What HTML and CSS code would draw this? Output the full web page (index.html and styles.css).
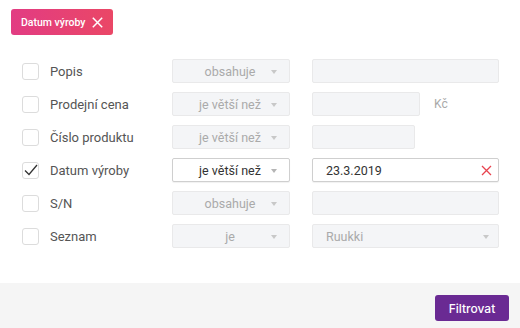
FILE: index.html
```html
<!DOCTYPE html>
<html lang="cs">
<head>
<meta charset="utf-8">
<link rel="stylesheet" href="styles.css">
</head>
<body>
<div class="page">
  <div class="main">
    <div class="badge">
      <span class="badge-text">Datum výroby</span>
      <svg class="badge-x" width="11" height="11" viewBox="0 0 11 11"><path d="M0.8 0.8L10.2 10.2M10.2 0.8L0.8 10.2" stroke="#fff" stroke-width="1.5" fill="none"/></svg>
    </div>
    <div class="rows">
      <div class="row">
        <span class="cb"></span>
        <span class="label">Popis</span>
        <div class="sel disabled"><span class="sel-text">obsahuje</span><span class="arrow"></span></div>
        <div class="inp disabled w187"></div>
      </div>
      <div class="row">
        <span class="cb"></span>
        <span class="label">Prodejní cena</span>
        <div class="sel disabled"><span class="sel-text">je větší než</span><span class="arrow"></span></div>
        <div class="inp disabled w108"></div>
        <span class="unit">Kč</span>
      </div>
      <div class="row">
        <span class="cb"></span>
        <span class="label">Číslo produktu</span>
        <div class="sel disabled"><span class="sel-text">je větší než</span><span class="arrow"></span></div>
        <div class="inp disabled w103"></div>
      </div>
      <div class="row">
        <span class="cb checked"><svg width="17" height="17" viewBox="0 0 17 17"><path d="M3 8.5L7 12.5L15 3" stroke="#333" stroke-width="1.3" fill="none"/></svg></span>
        <span class="label">Datum výroby</span>
        <div class="sel active"><span class="sel-text">je větší než</span><span class="arrow"></span></div>
        <div class="inp active w187"><span class="inp-text">23.3.2019</span>
          <svg class="clear" width="11" height="11" viewBox="0 0 11 11"><path d="M1 1L10 10M10 1L1 10" stroke="#e8434f" stroke-width="1.3" fill="none"/></svg>
        </div>
      </div>
      <div class="row">
        <span class="cb"></span>
        <span class="label">S/N</span>
        <div class="sel disabled"><span class="sel-text">obsahuje</span><span class="arrow"></span></div>
        <div class="inp disabled w187"></div>
      </div>
      <div class="row">
        <span class="cb"></span>
        <span class="label">Seznam</span>
        <div class="sel disabled"><span class="sel-text">je</span><span class="arrow"></span></div>
        <div class="inp disabled w187 drop"><span class="inp-text muted">Ruukki</span><span class="arrow"></span></div>
      </div>
    </div>
  </div>
  <div class="footer">
    <button class="btn">Filtrovat</button>
  </div>
</div>
</body>
</html>
```

FILE: styles.css
```css
* { box-sizing: border-box; }
html, body { margin: 0; padding: 0; background: #fff; }
body { font-family: "Roboto", "Inter", sans-serif; width: 520px; height: 328px; overflow: hidden; }
.page { display: flex; flex-direction: column; height: 328px; }
.main { height: 283px; padding: 9px 0 0 11px; }
.badge {
  display: flex; align-items: center; gap: 8px;
  width: 102px; height: 26px; padding: 0 0 0 10px;
  border-radius: 3px;
  background: linear-gradient(90deg, #e23c83, #ea4766);
  color: #fff; font-family: "Roboto", sans-serif; font-size: 10.5px; font-weight: 500;
}
.badge-text { white-space: nowrap; width: 63px; flex: none; }
.badge-x { flex: none; margin-left: 0; }
.rows { display: flex; flex-direction: column; gap: 9px; margin-top: 24px; margin-left: 11px; }
.row { display: flex; align-items: center; height: 24px; }
.cb {
  width: 17px; height: 17px; flex: none;
  border: 1px solid #dcdcdc; border-radius: 3px;
  margin-right: 11px; position: relative;
}
.cb svg { position: absolute; left: -1px; top: -1px; }
.label { width: 122px; flex: none; font-size: 13px; color: #555; }
.sel {
  width: 118px; height: 24px; flex: none;
  border-radius: 2px; display: flex; align-items: center; justify-content: center;
  position: relative; font-size: 12.5px; margin-right: 22px;
}
.sel-text { padding-right: 2px; }
.arrow {
  position: absolute; right: 12px; top: 10px;
  width: 0; height: 0;
  border-left: 3.5px solid transparent; border-right: 3.5px solid transparent;
  border-top: 4px solid #c8c8c8;
}
.disabled { background: #f4f5f7; border: 1px solid #e9e9ea; color: #aaa; }
.active { background: #fff; border: 1px solid #cfcfcf; color: #333; box-shadow: 0 1px 1px rgba(0,0,0,0.06); }
.active .arrow { border-top-color: #b5b5b5; }
.inp { height: 24px; border-radius: 2px; flex: none; position: relative; display: flex; align-items: center; font-size: 12.5px; }
.w187 { width: 187px; }
.w108 { width: 108px; }
.w103 { width: 103px; }
.inp-text { padding-left: 13px; }
.inp-text.muted { color: #aaa; }
.clear { position: absolute; right: 6px; top: 6px; }
.drop .arrow { right: 9px; }
.unit { margin-left: 14px; font-size: 12px; color: #aaa; }
.footer { height: 45px; background: #f5f5f5; display: flex; justify-content: flex-end; align-items: flex-start; padding: 12px 11px 0 0; }
.btn {
  width: 74px; height: 26px; border: none; border-radius: 3px;
  background: #6a2a93; color: #fff; font-family: "Inter", "Roboto", sans-serif;
  font-size: 12px; font-weight: 500; padding: 0;
}
```
